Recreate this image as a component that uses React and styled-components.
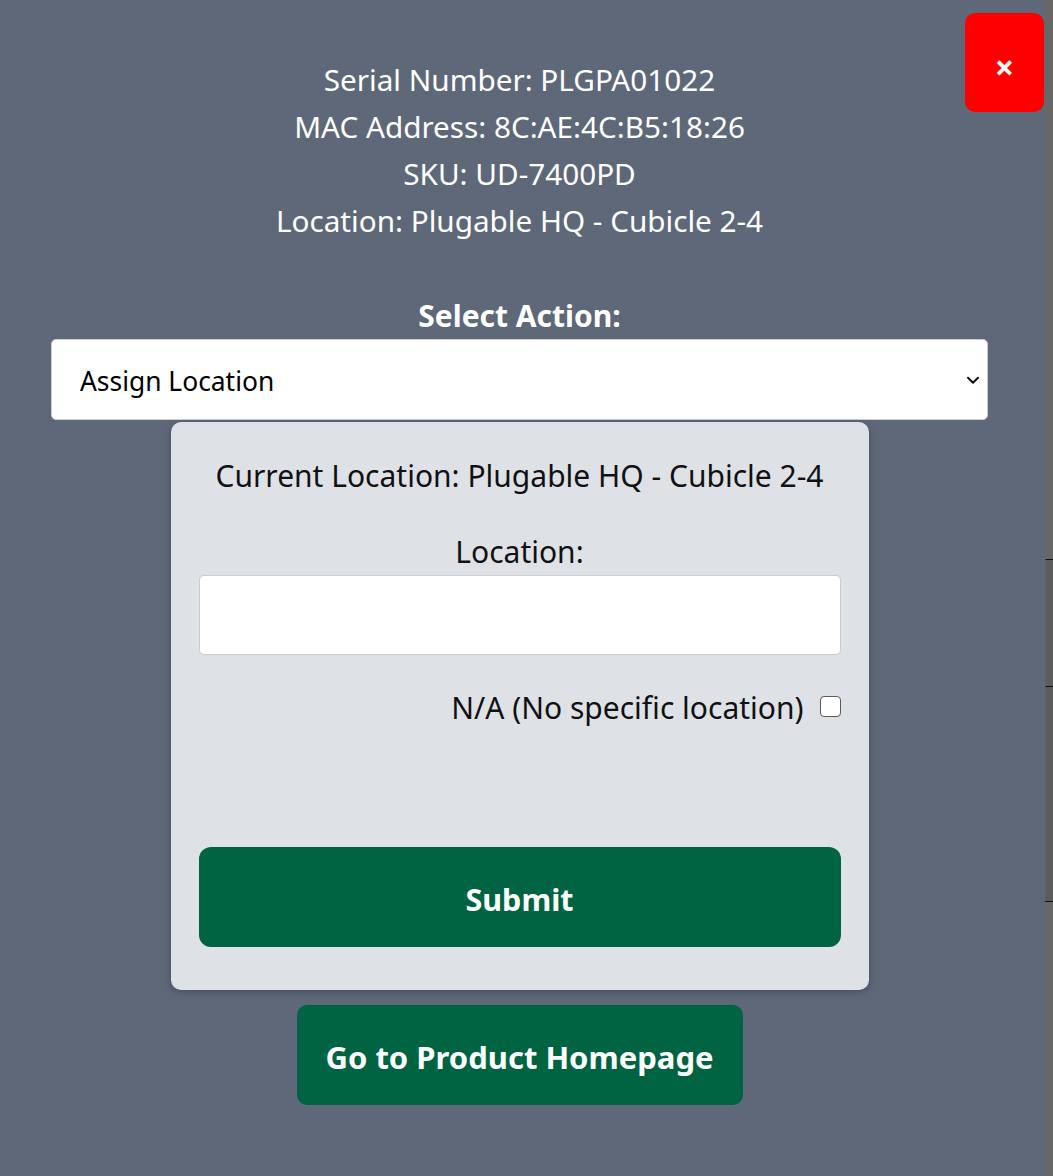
import React, { useState } from "react";
import styled, { createGlobalStyle } from "styled-components";

const Global = createGlobalStyle`
  html, body { margin: 0; padding: 0; }
  body {
    font-family: "Noto Sans", "Open Sans", sans-serif;
    background: #5e6879;
  }
  * { box-sizing: border-box; }
`;

const Screen = styled.div`
  display: flex;
  width: 1053px;
  min-height: 1176px;
  background: #5e6879;
  position: relative;
`;

const Modal = styled.div`
  flex: 1;
  display: flex;
  flex-direction: column;
  align-items: center;
  padding: 56px 57px 0 51px;
`;

const Gutter = styled.div`
  width: 8px;
  display: flex;
  flex-direction: column;
  background: #676767;
`;

const GutterSpace = styled.div`
  height: ${(p) => p.$h}px;
`;

const GutterTrack = styled.div`
  height: ${(p) => p.$h}px;
  background: #5b5d5c;
  border-top: 1px solid #111;
  border-left: 1px solid #626262;
`;

const GutterEnd = styled.div`
  border-top: 1px solid #111;
  flex: 1;
`;

const CloseButton = styled.button`
  position: absolute;
  top: 13px;
  left: 965px;
  width: 79px;
  height: 99px;
  border: none;
  border-radius: 10px;
  background: #ff0000;
  color: #fff;
  font-family: "Noto Sans", sans-serif;
  font-weight: 700;
  font-size: 34px;
  line-height: 1;
  display: flex;
  align-items: center;
  justify-content: center;
  padding: 8px 0 0;
  cursor: pointer;
`;

const InfoLine = styled.p`
  margin: 0;
  color: #fff;
  font-size: 29.7px;
  line-height: 47px;
  text-align: center;
`;

const ActionLabel = styled.label`
  margin: 52px 0 3px;
  color: #fff;
  font-size: 30px;
  font-weight: 700;
  line-height: 40px;
  text-align: center;
`;

const SelectWrap = styled.div`
  position: relative;
  width: 100%;
`;

const Select = styled.select`
  appearance: none;
  -webkit-appearance: none;
  width: 100%;
  height: 81px;
  background: #fff;
  border: 1px solid #c9ccd1;
  border-radius: 5px;
  padding: 2px 48px 0 28px;
  font-family: "Noto Sans", sans-serif;
  font-size: 26.4px;
  color: #000;
  outline: none;
`;

const Chevron = styled.svg`
  position: absolute;
  right: 8px;
  top: 37px;
  pointer-events: none;
`;

const Card = styled.div`
  width: 698px;
  margin-top: 2px;
  background: #dee2e6;
  border-radius: 10px;
  box-shadow: 0 2px 8px rgba(0, 0, 0, 0.25);
  padding: 28px 28px 43px;
  display: flex;
  flex-direction: column;
  color: #111;
`;

const CardText = styled.p`
  margin: ${(p) => p.$mt}px 0 0;
  font-size: 30px;
  line-height: 36px;
  text-align: center;
`;

const TextInput = styled.input`
  margin-top: 5px;
  width: 100%;
  height: 80px;
  background: #fff;
  border: 1px solid #c9ccd1;
  border-radius: 5px;
  padding: 0 20px;
  font-family: "Noto Sans", sans-serif;
  font-size: 26px;
  outline: none;
`;

const CheckRow = styled.label`
  margin-top: 35px;
  display: flex;
  justify-content: flex-end;
  align-items: center;
  gap: 16px;
  font-size: 30px;
  line-height: 36px;
`;

const Check = styled.input`
  appearance: none;
  -webkit-appearance: none;
  margin: 0;
  width: 21px;
  height: 21px;
  border: 1.5px solid #5a5a5a;
  border-radius: 4px;
  background: #fff;
  position: relative;
  top: -2px;
  &:checked {
    background: #0b6bd6;
    border-color: #0b6bd6;
  }
`;

const GreenButton = styled.button`
  width: ${(p) => p.$w || "100%"};
  height: 100px;
  margin-top: ${(p) => p.$mt}px;
  border: none;
  border-radius: ${(p) => p.$r}px;
  background: #006443;
  color: #fff;
  font-family: "Noto Sans", sans-serif;
  font-weight: 700;
  font-size: ${(p) => p.$fs}px;
  cursor: pointer;
  padding: 4px 0 0;
`;

export default function App() {
  const [action, setAction] = useState("assign");
  const [loc, setLoc] = useState("");
  const [na, setNa] = useState(false);

  return (
    <>
      <Global />
      <Screen>
        <Modal>
          <InfoLine>Serial Number: PLGPA01022</InfoLine>
          <InfoLine>MAC Address: 8C:AE:4C:B5:18:26</InfoLine>
          <InfoLine>SKU: UD-7400PD</InfoLine>
          <InfoLine>Location: Plugable HQ - Cubicle 2-4</InfoLine>

          <ActionLabel htmlFor="action">Select Action:</ActionLabel>
          <SelectWrap>
            <Select
              id="action"
              value={action}
              onChange={(e) => setAction(e.target.value)}
            >
              <option value="assign">Assign Location</option>
              <option value="other">Other</option>
            </Select>
            <Chevron width="14" height="9" viewBox="0 0 14 9">
              <path
                d="M2 1.8 L7 6.8 L12 1.8"
                fill="none"
                stroke="#111"
                strokeWidth="2"
                strokeLinecap="round"
                strokeLinejoin="round"
              />
            </Chevron>
          </SelectWrap>

          <Card>
            <CardText $mt={8}>Current Location: Plugable HQ - Cubicle 2-4</CardText>
            <CardText $mt={40}>Location:</CardText>
            <TextInput
              value={loc}
              onChange={(e) => setLoc(e.target.value)}
              disabled={na}
            />
            <CheckRow>
              N/A (No specific location)
              <Check
                type="checkbox"
                checked={na}
                onChange={(e) => setNa(e.target.checked)}
              />
            </CheckRow>
            <GreenButton $mt={121} $r={12} $fs={30.5}>
              Submit
            </GreenButton>
          </Card>

          <GreenButton $mt={15} $r={10} $w="446px" $fs={31}>
            Go to Product Homepage
          </GreenButton>
        </Modal>
        <Gutter>
          <GutterSpace $h={559} />
          <GutterTrack $h={127} />
          <GutterTrack $h={215} />
          <GutterEnd />
        </Gutter>
        <CloseButton aria-label="Close">×</CloseButton>
      </Screen>
    </>
  );
}
